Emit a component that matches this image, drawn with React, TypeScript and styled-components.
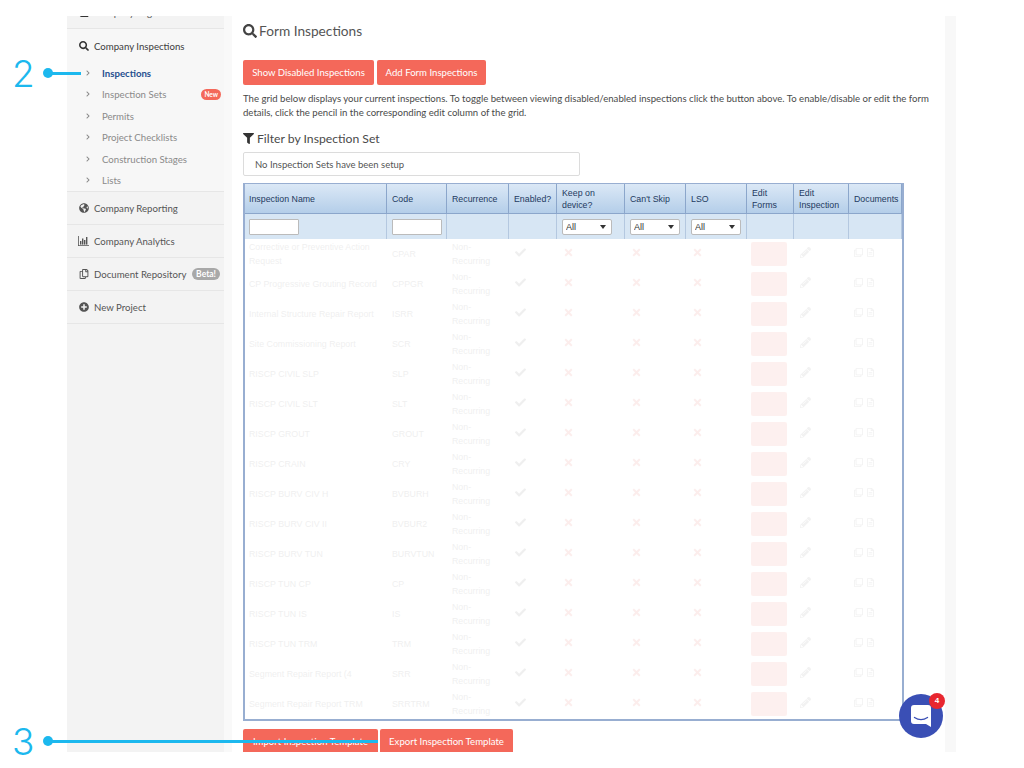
import React from "react";
import styled, { createGlobalStyle } from "styled-components";
import { FaSearch, FaGlobeAmericas, FaRegCopy, FaPlusCircle, FaFilter, FaBook, FaCheck, FaTimes, FaPencilAlt, FaRegClone, FaRegFileAlt, FaChevronRight } from "react-icons/fa";

const Global = createGlobalStyle`
  html, body { margin: 0; padding: 0; background: #fff; overflow: hidden; }
  #root { width: 1024px; height: 768px; }
  * { box-sizing: border-box; }
`;

const Page = styled.div`
  position: relative;
  width: 1024px;
  height: 768px;
  padding: 16px 0 16px 67px;
  font-family: "Lato", "Noto Sans", sans-serif;
  color: #4a4a4a;
  background: #fff;
`;

const Frame = styled.div`
  display: flex;
  width: 889px;
  height: 736px;
  overflow: hidden;
  background: #f8f8f8;
`;

const Sidebar = styled.nav`
  width: 157px;
  flex: none;
  background: #f3f3f3;
  font-size: 9.65px;
`;

const Gutter = styled.div`
  width: 8px;
  flex: none;
  background: #f9f9f9;
`;

const NavRow = styled.div<{ $h: number; $top?: number }>`
  display: flex;
  align-items: center;
  gap: 5px;
  height: ${(p) => p.$h}px;
  margin-top: ${(p) => p.$top ?? 0}px;
  padding: 0 4px 0 11px;
  border-bottom: 1px solid #e6e6e6;
  color: #555;
  white-space: nowrap;
`;

const IconSlot = styled.span<{ $c?: string }>`
  display: inline-flex;
  justify-content: center;
  width: 11px;
  font-size: 10px;
  flex: none;
  color: ${(p) => p.$c ?? "#555"};
`;

const Section = styled.div`
  background: #f7f7f7;
  border-bottom: 1px solid #e6e6e6;
`;

const SectionHead = styled.div`
  display: flex;
  align-items: center;
  gap: 5px;
  height: 32px;
  padding: 2px 0 0 11px;
  color: #3c3c3c;
`;

const SubList = styled.div`
  display: flex;
  flex-direction: column;
  padding-top: 1px;
`;

const SubRow = styled.div<{ $on?: boolean }>`
  display: flex;
  align-items: center;
  height: 21.5px;
  padding: 0 3px 0 18px;
  color: ${(p) => (p.$on ? "#1f4f8f" : "#8a8a8a")};
  font-weight: ${(p) => (p.$on ? 700 : 400)};
  svg { font-size: 6px; color: #888; margin-right: 11px; flex: none; }
`;

const Pill = styled.span<{ $bg: string }>`
  margin-left: auto;
  background: ${(p) => p.$bg};
  color: #fff;
  font-size: 6.5px;
  font-weight: 700;
  line-height: 11px;
  padding: 0 3px;
  border-radius: 6px;
`;

const BetaPill = styled(Pill)`
  font-size: 8.5px;
  line-height: 12px;
  padding: 0 4px;
`;

const Main = styled.main`
  width: 713px;
  flex: none;
  background: #fff;
  padding: 0 10px 0 11px;
`;

const Strip = styled.div`
  width: 11px;
  flex: none;
  background: #f8f8f8;
`;

const Title = styled.h1`
  display: flex;
  align-items: center;
  gap: 2px;
  margin: 0;
  height: 29px;
  font-size: 13.7px;
  font-weight: 400;
  color: #555;
  svg { color: #444; font-size: 14px; }
`;

const ButtonRow = styled.div<{ $top: number; $gap: number }>`
  display: flex;
  gap: ${(p) => p.$gap}px;
  margin-top: ${(p) => p.$top}px;
`;

const Btn = styled.button<{ $w: number }>`
  width: ${(p) => p.$w}px;
  height: 25px;
  flex: none;
  padding: 0;
  border: 0;
  border-radius: 2px;
  background: #f4685a;
  color: #fff;
  font: 400 9.6px "Lato", "Noto Sans", sans-serif;
`;

const Para = styled.p`
  margin: 7px 0 0;
  font-size: 9.6px;
  line-height: 14px;
  color: #4a4a4a;
`;

const Sub = styled.h2`
  display: flex;
  align-items: center;
  gap: 3px;
  margin: 9px 0 0;
  height: 18px;
  font-size: 12.2px;
  font-weight: 400;
  color: #4a4a4a;
  svg { font-size: 11px; color: #333; }
`;

const Notice = styled.div`
  display: flex;
  align-items: center;
  width: 337px;
  height: 24px;
  margin-top: 5px;
  padding-left: 11px;
  border: 1px solid #dcdcdc;
  border-radius: 2px;
  font-size: 9.5px;
  color: #555;
`;

const Table = styled.table`
  width: 661px;
  height: 537px;
  margin-top: 7px;
  table-layout: fixed;
  border-collapse: separate;
  border-spacing: 0;
  border: 2px solid #98aed1;
  border-top-width: 1px;
  font-family: "Liberation Sans", Arial, sans-serif;
  font-size: 8.8px;
`;

const Th = styled.th`
  height: 30px;
  padding: 0 5px;
  text-align: left;
  font-weight: 400;
  line-height: 12px;
  color: #1e3a60;
  background: linear-gradient(#dbe8f6, #b4cee9);
  border-right: 1px solid #8ba6cb;
  border-bottom: 1px solid #8ba6cb;
  &:first-child { padding-left: 4px; }
`;

const FilterCell = styled.td`
  height: 25px;
  padding: 0 5px;
  background: #d7e6f4;
  border-right: 1px solid #b4c8e0;
  &:first-child { padding-left: 4px; }
`;

const TextFilter = styled.input`
  display: block;
  width: 50px;
  height: 16px;
  padding: 0;
  border: 1px solid #bbb;
  border-radius: 1px;
  background: #fff;
`;

const SelectWrap = styled.div`
  position: relative;
  width: 50px;
  height: 16px;
  &::after {
    content: "";
    position: absolute;
    right: 6px;
    top: 6px;
    border: 3px solid transparent;
    border-top: 4px solid #333;
    border-bottom: 0;
  }
`;

const FilterSelect = styled.select`
  appearance: none;
  display: block;
  width: 100%;
  height: 100%;
  padding: 0 0 0 3px;
  border: 1px solid #bbb;
  border-radius: 2px;
  background: #fff;
  font: 9px "Liberation Sans", Arial, sans-serif;
  color: #333;
`;

const Row = styled.tr`
  opacity: 0.09;
`;

const Td = styled.td<{ $c?: string }>`
  height: 30px;
  padding: 0 5px;
  line-height: 14px;
  color: ${(p) => p.$c ?? "#555"};
  overflow: hidden;
  white-space: normal;
  &:first-child { padding-left: 4px; }
`;

const IconTd = styled(Td)`
  padding-left: 6px;
  font-size: 11px;
`;

const EditBtn = styled.span`
  display: block;
  width: 36px;
  height: 24px;
  margin-left: -1px;
  border-radius: 2px;
  background: #f4685a;
`;

const DocIcons = styled.span`
  display: inline-flex;
  gap: 3px;
  font-size: 9px;
  color: #777;
`;

const Label = styled.span`
  position: absolute;
  left: 12px;
  font: 350 37px/37px "Inter", "Liberation Sans", sans-serif;
  color: #1cb8ee;
`;

const Dot = styled.span`
  position: absolute;
  left: 43px;
  width: 10px;
  height: 10px;
  border-radius: 50%;
  background: #1cb8ee;
`;

const Leader = styled.span<{ $w: number }>`
  position: absolute;
  left: 48px;
  width: ${(p) => p.$w}px;
  height: 2.5px;
  background: #1cb8ee;
`;

const Chat = styled.button`
  position: absolute;
  left: 899px;
  top: 694px;
  width: 44px;
  height: 44px;
  padding: 0;
  border: 0;
  border-radius: 50%;
  background: #3a4fb5;
  display: flex;
  align-items: center;
  justify-content: center;
`;

const Badge = styled.span`
  position: absolute;
  left: 30px;
  top: -1px;
  width: 16px;
  height: 16px;
  border-radius: 50%;
  background: #e8262f;
  color: #fff;
  font: 700 8px/16px "Liberation Sans", sans-serif;
  text-align: center;
`;

const rows = [
  ["Corrective or Preventive Action Request", "CPAR"],
  ["CP Progressive Grouting Record", "CPPGR"],
  ["Internal Structure Repair Report", "ISRR"],
  ["Site Commissioning Report", "SCR"],
  ["RISCP CIVIL SLP", "SLP"],
  ["RISCP CIVIL SLT", "SLT"],
  ["RISCP GROUT", "GROUT"],
  ["RISCP CRAIN", "CRY"],
  ["RISCP BURV CIV H", "BVBURH"],
  ["RISCP BURV CIV II", "BVBUR2"],
  ["RISCP BURV TUN", "BURVTUN"],
  ["RISCP TUN CP", "CP"],
  ["RISCP TUN IS", "IS"],
  ["RISCP TUN TRM", "TRM"],
  ["Segment Repair Report (4", "SRR"],
  ["Segment Repair Report TRM", "SRRTRM"],
];

const cols = [142, 60, 62, 48, 68, 61, 61, 47, 55, 53];
const subs = ["Inspections", "Inspection Sets", "Permits", "Project Checklists", "Construction Stages", "Lists"];

const AllSelect = () => (
  <SelectWrap>
    <FilterSelect defaultValue="All">
      <option>All</option>
    </FilterSelect>
  </SelectWrap>
);

const BarChartIcon = () => (
  <svg width="11" height="10" viewBox="0 0 11 10" fill="#555">
    <path d="M0 0h.8v9.2H11V10H0z" />
    <rect x="2" y="5" width="1.4" height="3.6" />
    <rect x="4" y="2.5" width="1.4" height="6.1" />
    <rect x="6" y="4" width="1.4" height="4.6" />
    <rect x="8" y="1" width="1.4" height="7.6" />
  </svg>
);

export default function App() {
  return (
    <Page>
      <Global />
      <Frame>
        <Sidebar>
          <NavRow $h={33} $top={-20}>
            <IconSlot $c="#333"><FaBook /></IconSlot>
            Company Registers
          </NavRow>
          <Section>
            <SectionHead>
              <IconSlot $c="#333"><FaSearch /></IconSlot>
              Company Inspections
            </SectionHead>
            <SubList>
              {subs.map((s, i) => (
                <SubRow key={s} $on={i === 0}>
                  <FaChevronRight />
                  {s}
                  {i === 1 && <Pill $bg="#f4685a">New</Pill>}
                </SubRow>
              ))}
            </SubList>
          </Section>
          <NavRow $h={33}>
            <IconSlot><FaGlobeAmericas /></IconSlot>
            Company Reporting
          </NavRow>
          <NavRow $h={33}>
            <IconSlot><BarChartIcon /></IconSlot>
            Company Analytics
          </NavRow>
          <NavRow $h={33}>
            <IconSlot><FaRegCopy /></IconSlot>
            Document Repository
            <BetaPill $bg="#a8a8a8">Beta!</BetaPill>
          </NavRow>
          <NavRow $h={33}>
            <IconSlot><FaPlusCircle /></IconSlot>
            New Project
          </NavRow>
        </Sidebar>
        <Gutter />
        <Main>
          <Title><FaSearch />Form Inspections</Title>
          <ButtonRow $top={15} $gap={3}>
            <Btn $w={131}>Show Disabled Inspections</Btn>
            <Btn $w={109}>Add Form Inspections</Btn>
          </ButtonRow>
          <Para>
            The grid below displays your current inspections. To toggle between viewing disabled/enabled inspections click the button above. To enable/disable or edit the form details, click the pencil in the corresponding edit column of the grid.
          </Para>
          <Sub><FaFilter />Filter by Inspection Set</Sub>
          <Notice>No Inspection Sets have been setup</Notice>
          <Table>
            <colgroup>
              {cols.map((w, i) => <col key={i} style={{ width: w }} />)}
            </colgroup>
            <thead>
              <tr>
                <Th>Inspection Name</Th>
                <Th>Code</Th>
                <Th>Recurrence</Th>
                <Th>Enabled?</Th>
                <Th>Keep on device?</Th>
                <Th>Can't Skip</Th>
                <Th>LSO</Th>
                <Th>Edit Forms</Th>
                <Th>Edit Inspection</Th>
                <Th>Documents</Th>
              </tr>
              <tr>
                <FilterCell><TextFilter /></FilterCell>
                <FilterCell><TextFilter /></FilterCell>
                <FilterCell />
                <FilterCell />
                <FilterCell><AllSelect /></FilterCell>
                <FilterCell><AllSelect /></FilterCell>
                <FilterCell><AllSelect /></FilterCell>
                <FilterCell />
                <FilterCell />
                <FilterCell />
              </tr>
            </thead>
            <tbody>
              {rows.map(([name, code]) => (
                <Row key={name}>
                  <Td>{name}</Td>
                  <Td>{code}</Td>
                  <Td>Non-Recurring</Td>
                  <IconTd $c="#555"><FaCheck /></IconTd>
                  <IconTd $c="#e0453a"><FaTimes /></IconTd>
                  <IconTd $c="#e0453a"><FaTimes /></IconTd>
                  <IconTd $c="#e0453a"><FaTimes /></IconTd>
                  <Td><EditBtn /></Td>
                  <IconTd $c="#777"><FaPencilAlt /></IconTd>
                  <Td><DocIcons><FaRegClone /><FaRegFileAlt /></DocIcons></Td>
                </Row>
              ))}
            </tbody>
          </Table>
          <ButtonRow $top={8} $gap={2}>
            <Btn $w={135}>Import Inspection Template</Btn>
            <Btn $w={133}>Export Inspection Template</Btn>
          </ButtonRow>
        </Main>
        <Strip />
      </Frame>
      <Label style={{ top: 55 }}>2</Label>
      <Dot style={{ top: 68 }} />
      <Leader $w={33} style={{ top: 72 }} />
      <Label style={{ top: 723 }}>3</Label>
      <Dot style={{ top: 736 }} />
      <Leader $w={330} style={{ top: 740 }} />
      <Chat aria-label="Open chat">
        <svg width="20" height="22" viewBox="0 0 20 22">
          <path d="M3 0h14a3 3 0 0 1 3 3v19l-5-3H3a3 3 0 0 1-3-3V3a3 3 0 0 1 3-3z" fill="#fff" />
          <path d="M3.5 12.5c4 2.6 9 2.6 13 0" fill="none" stroke="#3a4fb5" strokeWidth="1.4" strokeLinecap="round" />
        </svg>
        <Badge>4</Badge>
      </Chat>
    </Page>
  );
}
